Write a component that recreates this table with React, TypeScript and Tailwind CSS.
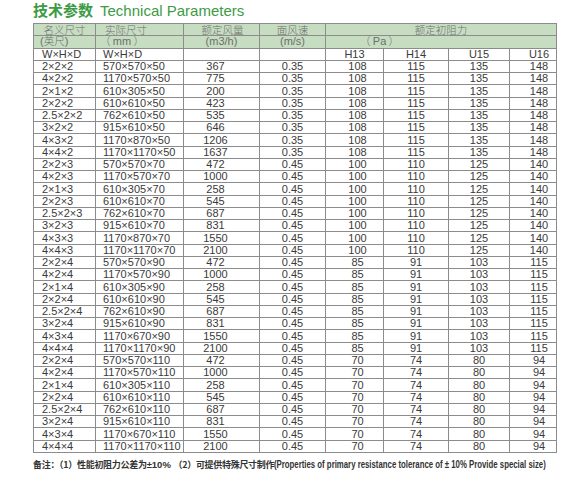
import React from 'react';

type Row = [string, string, string];

const groups: { rows: Row[]; v: string; pa: [string, string, string, string] }[] = [
  {
    v: '0.35',
    pa: ['108', '115', '135', '148'],
    rows: [
      ['2×2×2', '570×570×50', '367'],
      ['4×2×2', '1170×570×50', '775'],
      ['2×1×2', '610×305×50', '200'],
      ['2×2×2', '610×610×50', '423'],
      ['2.5×2×2', '762×610×50', '535'],
      ['3×2×2', '915×610×50', '646'],
      ['4×3×2', '1170×870×50', '1206'],
      ['4×4×2', '1170×1170×50', '1637'],
    ],
  },
  {
    v: '0.45',
    pa: ['100', '110', '125', '140'],
    rows: [
      ['2×2×3', '570×570×70', '472'],
      ['4×2×3', '1170×570×70', '1000'],
      ['2×1×3', '610×305×70', '258'],
      ['2×2×3', '610×610×70', '545'],
      ['2.5×2×3', '762×610×70', '687'],
      ['3×2×3', '915×610×70', '831'],
      ['4×3×3', '1170×870×70', '1550'],
      ['4×4×3', '1170×1170×70', '2100'],
    ],
  },
  {
    v: '0.45',
    pa: ['85', '91', '103', '115'],
    rows: [
      ['2×2×4', '570×570×90', '472'],
      ['4×2×4', '1170×570×90', '1000'],
      ['2×1×4', '610×305×90', '258'],
      ['2×2×4', '610×610×90', '545'],
      ['2.5×2×4', '762×610×90', '687'],
      ['3×2×4', '915×610×90', '831'],
      ['4×3×4', '1170×670×90', '1550'],
      ['4×4×4', '1170×1170×90', '2100'],
    ],
  },
  {
    v: '0.45',
    pa: ['70', '74', '80', '94'],
    rows: [
      ['2×2×4', '570×570×110', '472'],
      ['4×2×4', '1170×570×110', '1000'],
      ['2×1×4', '610×305×110', '258'],
      ['2×2×4', '610×610×110', '545'],
      ['2.5×2×4', '762×610×110', '687'],
      ['3×2×4', '915×610×110', '831'],
      ['4×3×4', '1170×670×110', '1550'],
      ['4×4×4', '1170×1170×110', '2100'],
    ],
  },
];

const cell = 'border border-[#8c8c8c] p-0 leading-[11px] whitespace-nowrap';
const cjk = "[font-family:'Noto_Sans_CJK_SC','Noto_Sans_CJK_JP',sans-serif]";
const head = `${cjk} font-light text-[10.5px] leading-[10px]`;

export default function App() {
  return (
    <div className="w-[571px] h-[481px] bg-white pl-[33px] [font-family:'Liberation_Sans_Narrow','Liberation_Sans',Arial,sans-serif] text-[#3a3a3a]">
      <div className="h-[21px] leading-[21px] -mt-[1px] text-[15px] text-[#3d9a45] whitespace-nowrap">
        <span className={`${cjk} font-bold`}>技术参数</span>
        <span className="[font-family:'Liberation_Sans',Arial,sans-serif] ml-[7px]">Technical Parameters</span>
      </div>
      <table className="mt-[3px] border-collapse table-fixed w-[523px] text-[11px]">
        <colgroup>
          <col className="w-[62px]" />
          <col className="w-[88px]" />
          <col className="w-[76px]" />
          <col className="w-[66px]" />
          <col className="w-[58px]" />
          <col className="w-[65px]" />
          <col className="w-[61px]" />
          <col className="w-[47px]" />
        </colgroup>
        <thead>
          <tr className="h-[12.3px] bg-[#c6ddc1] text-[#6e6e6e]">
            <td className={`${cell} ${head} text-center`}>名义尺寸</td>
            <td className={`${cell} ${head} pl-[9px]`}>实际尺寸</td>
            <td className={`${cell} ${head} text-center pl-[2px]`}>额定风量</td>
            <td className={`${cell} ${head} text-center`}>面风速</td>
            <td colSpan={4} className={`${cell} ${head} text-center`}>额定初阻力</td>
          </tr>
          <tr className="h-[12.3px] bg-[#c6ddc1] text-[#6e6e6e]">
            <td className={`${cell} pl-[6px]`}>
              (<span className={head}>英尺</span>)
            </td>
            <td className={`${cell} pl-[4px]`}>
              <span className={head}>（ </span>mm<span className={head}> ）</span>
            </td>
            <td className={`${cell} text-center`}>(m3/h)</td>
            <td className={`${cell} text-center`}>(m/s)</td>
            <td colSpan={4} className={`${cell} pl-[34px]`}>
              <span className={head}>（ </span>Pa<span className={head}> ）</span>
            </td>
          </tr>
          <tr className="h-[12.3px]">
            <td className={`${cell} pl-[8px]`}>W×H×D</td>
            <td className={`${cell} pl-[7px]`}>W×H×D</td>
            <td className={cell}></td>
            <td className={cell}></td>
            <td className={`${cell} text-center`}>H13</td>
            <td className={`${cell} text-center`}>H14</td>
            <td className={`${cell} text-center`}>U15</td>
            <td className={`${cell} text-center pl-[12px]`}>U16</td>
          </tr>
        </thead>
        <tbody>
          {groups.map((g, gi) =>
            g.rows.map((r, ri) => (
              <tr key={`${gi}-${ri}`} className="h-[12.25px]">
                <td className={`${cell} pl-[8px]`}>{r[0]}</td>
                <td className={`${cell} pl-[7px]`}>{r[1]}</td>
                <td className={`${cell} text-center pr-[12px]`}>{r[2]}</td>
                <td className={`${cell} text-center`}>{g.v}</td>
                <td className={`${cell} text-center pl-[6px]`}>{g.pa[0]}</td>
                <td className={`${cell} text-center`}>{g.pa[1]}</td>
                <td className={`${cell} text-center`}>{g.pa[2]}</td>
                <td className={`${cell} text-center pl-[12px]`}>{g.pa[3]}</td>
              </tr>
            ))
          )}
        </tbody>
      </table>
      <div className="mt-[3px] w-[530px] overflow-hidden h-[14px] leading-[14px] font-bold text-[#333] whitespace-nowrap">
        <span className={`${cjk} text-[9px] tracking-[-0.3px]`}>备注：（1）性能初阻力公差为</span>
        <span className="text-[9.5px]">±10% </span>
        <span className={`${cjk} text-[9px] tracking-[-0.3px]`}>（2）可提供特殊尺寸制作</span>
        <span className="inline-block origin-left scale-x-[0.78] text-[10px]">
          (Properties of primary resistance tolerance of ± 10% Provide special size)
        </span>
      </div>
    </div>
  );
}
